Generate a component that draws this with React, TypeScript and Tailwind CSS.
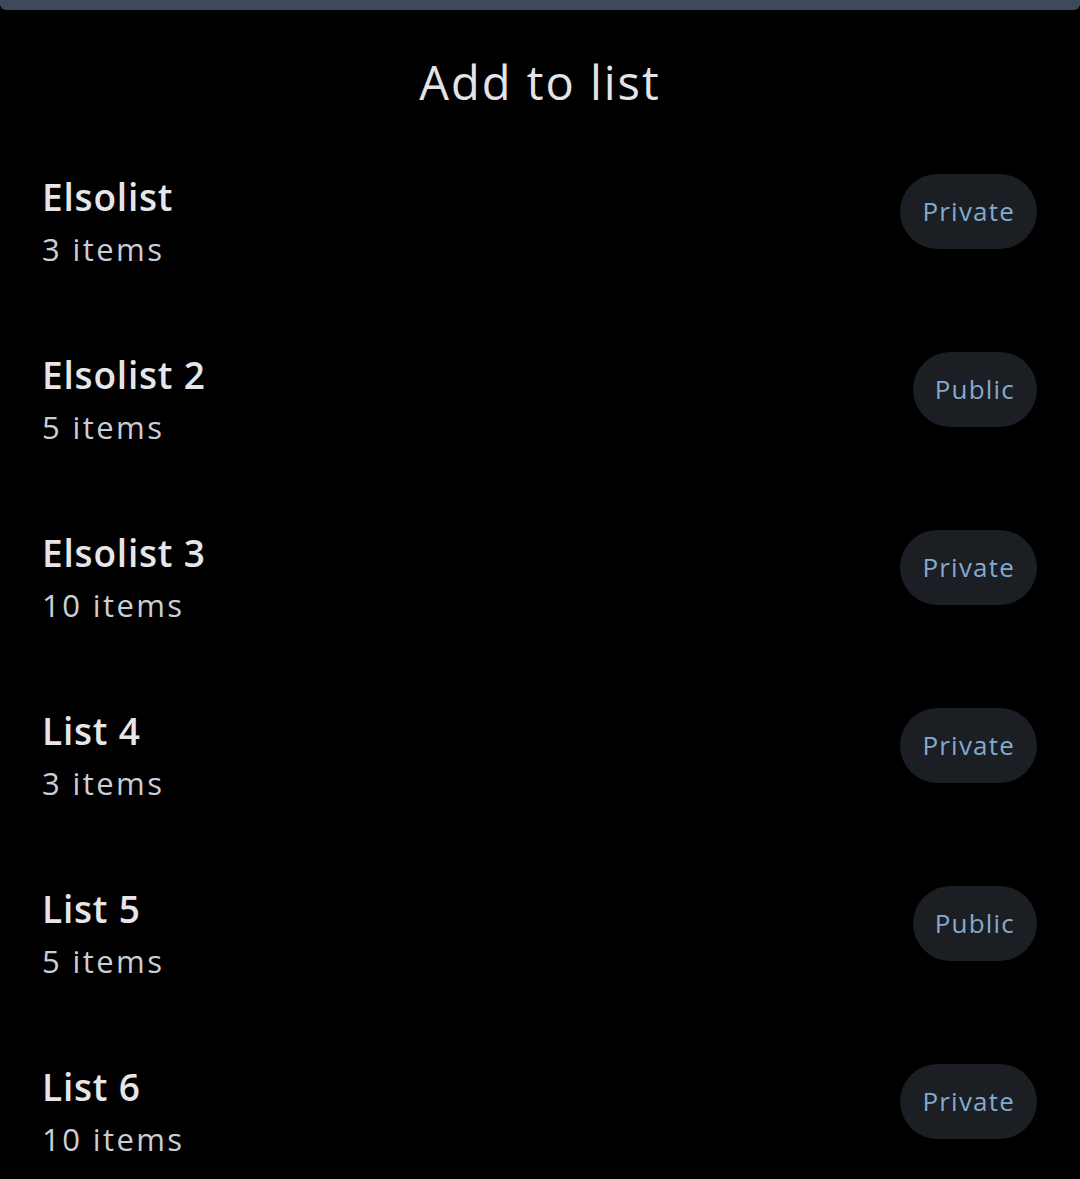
const lists = [
  { name: 'Elsolist', count: 3, visibility: 'Private' },
  { name: 'Elsolist 2', count: 5, visibility: 'Public' },
  { name: 'Elsolist 3', count: 10, visibility: 'Private' },
  { name: 'List 4', count: 3, visibility: 'Private' },
  { name: 'List 5', count: 5, visibility: 'Public' },
  { name: 'List 6', count: 10, visibility: 'Private' },
]

function ListRow({ name, count, visibility }: { name: string; count: number; visibility: string }) {
  return (
    <div className="flex items-start justify-between pl-[42px] pr-[43px]">
      <div className="flex flex-col">
        <span className="text-[37px] leading-[46px] font-semibold text-[#e6e6ea] tracking-[0.8px]">{name}</span>
        <span className="mt-[9px] text-[31px] leading-[40px] text-[#cbced4] tracking-[2.4px]">{count} items</span>
      </div>
      <span className="h-[75px] px-[22px] flex items-center rounded-full bg-[#1b1e22] text-[26px] text-[#83a9cf] tracking-[1.2px]">
        {visibility}
      </span>
    </div>
  )
}

export default function App() {
  return (
    <div className="w-[1080px] h-[1179px] overflow-hidden bg-black" style={{ fontFamily: '"Open Sans", "Noto Sans", sans-serif' }}>
      <div className="h-[10px] bg-[#3c4a5c] rounded-b-[6px]" />
      <h1 className="mt-[44px] h-[56px] text-center text-[47px] leading-[56px] font-medium text-[#e4e4e8] tracking-[2px]">Add to list</h1>
      <div className="mt-[64px] flex flex-col gap-[83px]">
        {lists.map((l) => (
          <ListRow key={l.name} {...l} />
        ))}
      </div>
    </div>
  )
}
